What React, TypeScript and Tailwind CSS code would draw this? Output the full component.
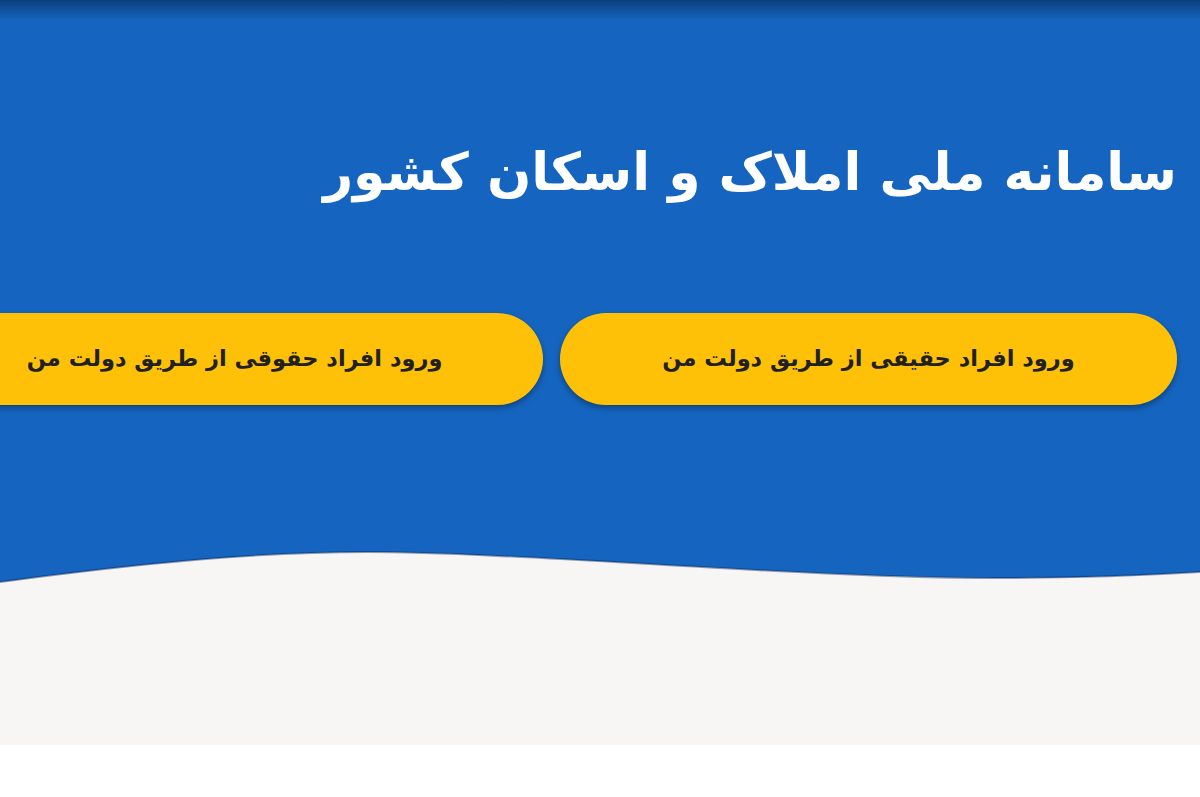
import React from "react";

const buttons = [
  "ورود افراد حقیقی از طریق دولت من",
  "ورود افراد حقوقی از طریق دولت من",
];

export default function App() {
  return (
    <div
      dir="rtl"
      className="w-[1200px] h-[797px] overflow-hidden bg-white"
      style={{ fontFamily: '"DejaVu Sans", "Noto Sans", sans-serif' }}
    >
      <section className="bg-[#1565c0] h-[550px] flex flex-col">
        <div className="h-[20px] bg-gradient-to-b from-[#0c3f7d] to-[#1565c0]" />
        <h1 className="mt-[126px] pr-[23px] text-white font-bold text-[52px] leading-[1] whitespace-nowrap">
          سامانه ملی املاک و اسکان کشور
        </h1>
        <div className="mt-[115px] pr-[23px] flex gap-[17px]">
          {buttons.map((label) => (
            <button
              key={label}
              className="shrink-0 w-[617px] h-[92px] rounded-full bg-[#ffc107] text-[#212121] font-bold text-[22.5px] shadow-[0_3px_6px_rgba(0,0,0,0.35)] flex items-center justify-center"
            >
              {label}
            </button>
          ))}
        </div>
      </section>
      <div className="bg-[#f7f6f4]">
        <svg width="1200" height="36" viewBox="0 0 1200 36" className="block">
          <path
            d="M0,32 C150,12 260,2 367,2 C520,2 800,28 995,28 C1090,28 1150,25 1200,22 V0 H0 Z"
            fill="#1565c0"
          />
          <path
            d="M0,32 C150,12 260,2 367,2 C520,2 800,28 995,28 C1090,28 1150,25 1200,22"
            fill="none"
            stroke="rgba(10,40,90,0.45)"
            strokeWidth="2"
          />
        </svg>
        <div className="h-[159px]" />
      </div>
    </div>
  );
}
